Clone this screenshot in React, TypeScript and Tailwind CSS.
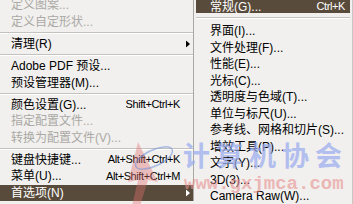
import React from "react";

const font = { fontFamily: '"Liberation Sans", "Noto Sans CJK SC", sans-serif' };

type Item =
  | { sep: true }
  | { label: string; shortcut?: string; disabled?: boolean; sub?: boolean; active?: boolean };

const left: Item[] = [
  { label: "定义图案...", disabled: true },
  { label: "定义自定形状...", disabled: true },
  { sep: true },
  { label: "清理(R)", sub: true },
  { sep: true },
  { label: "Adobe PDF 预设..." },
  { label: "预设管理器(M)..." },
  { sep: true },
  { label: "颜色设置(G)...", shortcut: "Shift+Ctrl+K" },
  { label: "指定配置文件...", disabled: true },
  { label: "转换为配置文件(V)...", disabled: true },
  { sep: true },
  { label: "键盘快捷键...", shortcut: "Alt+Shift+Ctrl+K" },
  { label: "菜单(U)...", shortcut: "Alt+Shift+Ctrl+M" },
  { label: "首选项(N)", sub: true, active: true },
];

const right = [
  "界面(I)...",
  "文件处理(F)...",
  "性能(E)...",
  "光标(C)...",
  "透明度与色域(T)...",
  "单位与标尺(U)...",
  "参考线、网格和切片(S)...",
  "增效工具(P)...",
  "文字(Y)...",
  "3D(3)...",
  "Camera Raw(W)...",
];

function Arrow({ white }: { white?: boolean }) {
  return (
    <svg width="4" height="7" viewBox="0 0 4 7" className="absolute right-[3px] top-1/2 -translate-y-1/2">
      <path d="M0 0 L4 3.5 L0 7 Z" fill={white ? "#ffffff" : "#000000"} />
    </svg>
  );
}

export default function App() {
  return (
    <div className="relative w-[353px] h-[204px] overflow-hidden bg-[#f1f0ee] text-[12px]" style={font}>
      <div className="flex h-full">
        {/* Left menu */}
        <div className="w-[194px] h-full border-r border-[#a9a8a5] flex flex-col mt-[-3px]">
          {left.map((it, i) =>
            "sep" in it ? (
              <div key={i} className="h-[7px] flex flex-col justify-center">
                <div className="border-t border-[#c3c2bf] border-b border-b-white" />
              </div>
            ) : (
              <div
                key={i}
                className={`relative h-[16.5px] shrink-0 flex items-center pl-[11px] pr-[13px] leading-none ${
                  it.active ? "bg-[#584b3b] text-white" : it.disabled ? "text-[#aaa9a5]" : "text-black"
                }`}
              >
                <span className="flex-1 whitespace-nowrap">{it.label}</span>
                {it.shortcut && <span className="whitespace-nowrap text-[11px] tracking-[-0.4px]">{it.shortcut}</span>}
                {it.sub && <Arrow white={it.active} />}
              </div>
            )
          )}
        </div>
        {/* Submenu */}
        <div className="flex-1 h-full pl-[2px] pr-[2px] border-r border-[#c8c7c4] flex flex-col">
          <div className="h-[13px] shrink-0 bg-[#584b3b] text-white flex items-center pl-[14px] pr-[5px] leading-none">
            <span className="flex-1">常规(G)...</span>
            <span className="text-[11px] tracking-[-0.4px]">Ctrl+K</span>
          </div>
          <div className="h-[10px] shrink-0 flex flex-col justify-center">
            <div className="border-t border-[#c3c2bf] border-b border-b-white" />
          </div>
          {right.map((r) => (
            <div key={r} className="h-[16.5px] shrink-0 flex items-center pl-[14px] leading-none text-black whitespace-nowrap">
              {r}
            </div>
          ))}
        </div>
      </div>

      {/* Watermark */}
      <svg className="absolute left-[126px] top-[138px] pointer-events-none" width="50" height="70" viewBox="0 0 50 70">
        <path d="M12 4 L32 44 L22 42 L14 68 L6 68 L12 42 L2 44 Z" fill="#e07070" opacity="0.4" />
        <ellipse cx="28" cy="20" rx="20" ry="8" transform="rotate(-25 28 20)" fill="none" stroke="#7090d8" strokeWidth="1.5" opacity="0.55" />
      </svg>
      <div
        className="absolute left-[183px] top-[135px] text-[27px] font-bold text-[#98aaee] opacity-70 tracking-[6px] whitespace-nowrap pointer-events-none"
        style={{ fontFamily: '"Noto Sans CJK SC", sans-serif' }}
      >
        计算机协会
      </div>
      <div
        className="absolute left-[184px] top-[170px] text-[19px] font-bold text-[#e89090] opacity-60 whitespace-nowrap pointer-events-none"
        style={{ fontFamily: '"Liberation Mono", monospace' }}
      >
        www.gxjmca.com
      </div>
    </div>
  );
}
